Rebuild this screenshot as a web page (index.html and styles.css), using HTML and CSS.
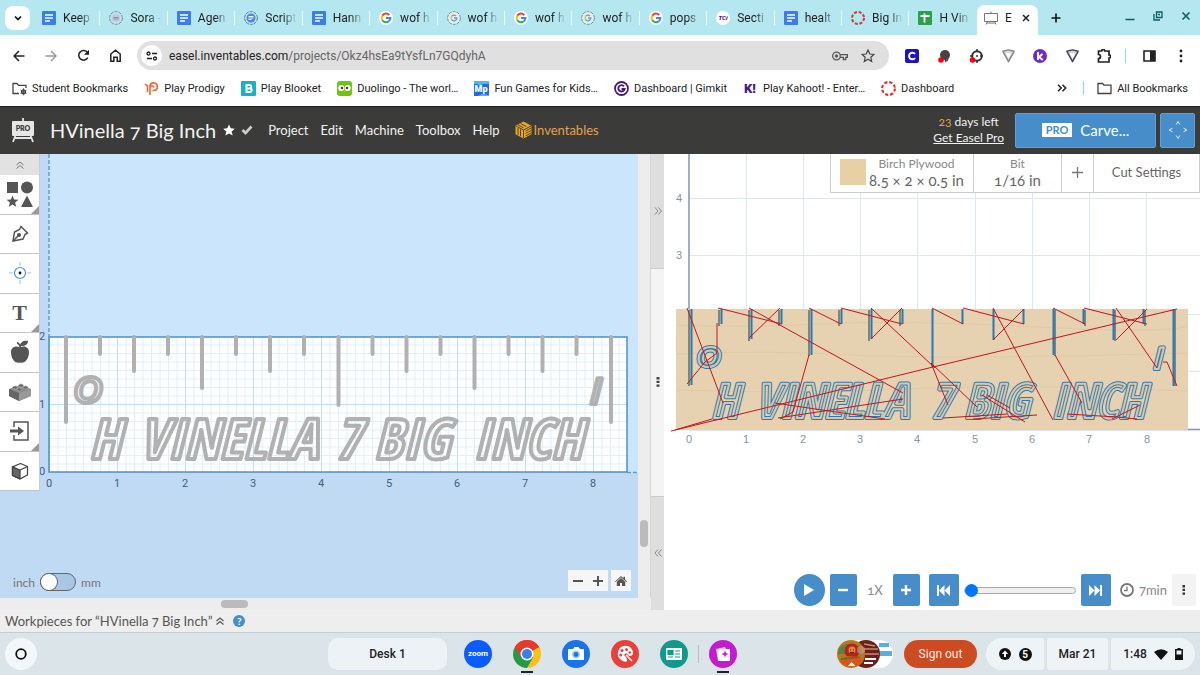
FILE: index.html
```html
<!DOCTYPE html>
<html lang="en">

<head>
    <meta charset="UTF-8">
    <meta name="viewport" content="width=device-width, initial-scale=1.0">
    <title>Easel - HVinella 7 Big Inch</title>
    <link rel="stylesheet" href="styles.css">
</head>

<body>
    <!-- shared icons -->
    <svg class="defs" width="0" height="0" aria-hidden="true">
        <symbol id="docs" viewBox="0 0 14 14">
            <rect width="14" height="14" rx="1" fill="#3b7ded" />
            <path d="M3 4h8M3 7h8M3 10h5" stroke="#fff" stroke-width="1.4" />
        </symbol>
        <symbol id="google" viewBox="0 0 14 14">
            <circle cx="7" cy="7" r="7" fill="#fff" />
            <g fill="none" stroke-width="2">
                <path d="M10.3 4A4.4 4.4 0 0 0 3.3 4.7" stroke="#ea4335" />
                <path d="M3.3 4.7A4.4 4.4 0 0 0 3.3 9.3" stroke="#fbbc05" />
                <path d="M3.3 9.3A4.4 4.4 0 0 0 9.8 10.3" stroke="#34a853" />
                <path d="M9.8 10.3A4.4 4.4 0 0 0 11.4 7H7" stroke="#4285f4" />
            </g>
        </symbol>
        <symbol id="google-off" viewBox="0 0 14 14">
            <circle cx="7" cy="7" r="6.4" fill="#dcf1f4" stroke="#7c8b94" stroke-width="1" stroke-dasharray="3 1" />
            <g fill="none" stroke-width="1.3">
                <path d="M9 5A2.9 2.9 0 0 0 4.5 5.5" stroke="#e0756c" />
                <path d="M4.5 5.5A2.9 2.9 0 0 0 4.5 8.5" stroke="#dcb958" />
                <path d="M4.5 8.5A2.9 2.9 0 0 0 9 9" stroke="#69a67a" />
                <path d="M9 9A2.9 2.9 0 0 0 9.8 7H7" stroke="#6d96d6" />
            </g>
        </symbol>
        <symbol id="canvas" viewBox="0 0 14 14">
            <circle cx="7" cy="7" r="6" fill="none" stroke="#d6392f" stroke-width="2" stroke-dasharray="3 1.7" />
        </symbol>
        <symbol id="shield" viewBox="0 0 16 16">
            <path d="M2 3.500L8 2l6 1.500L8 14.500z" fill="#d8d8dc" stroke="currentColor" stroke-width="1.6" stroke-linejoin="round" />
            <path d="M5 5.500h6L8 11z" fill="#fff" />
        </symbol>
    </svg>

    <header class="tabstrip">
        <button class="tab-search" aria-label="Search tabs">
            <svg width="10" height="10" viewBox="0 0 10 10"><path d="M2 3.500l3 3 3-3" fill="none" stroke="#111" stroke-width="1.700" /></svg>
        </button>
        <div class="tabs">
            <a class="tab" href="#"><svg><use href="#docs" /></svg><span>Keep</span></a>
            <a class="tab" href="#"><svg viewBox="0 0 14 14"><circle cx="7" cy="7" r="6.400" fill="none" stroke="#7c8b94" stroke-dasharray="3 1" /><circle cx="7" cy="7" r="4" fill="#cfc5d8" /><path d="M4.500 6.500h5M4.500 8h5" stroke="#7f8fb5" /></svg><span>Sora -</span></a>
            <a class="tab" href="#"><svg><use href="#docs" /></svg><span>Agen</span></a>
            <a class="tab" href="#"><svg viewBox="0 0 14 14"><circle cx="7" cy="7" r="6.400" fill="none" stroke="#62788a" stroke-dasharray="3 1" /><circle cx="7" cy="7" r="4.500" fill="#4f86e6" /><path d="M4.500 5.500h5M4.500 7h5M4.500 8.500h3" stroke="#fff" stroke-width=".9" /></svg><span>Script</span></a>
            <a class="tab" href="#"><svg><use href="#docs" /></svg><span>Hann</span></a>
            <a class="tab" href="#"><svg><use href="#google" /></svg><span>wof h</span></a>
            <a class="tab" href="#"><svg><use href="#google-off" /></svg><span>wof h</span></a>
            <a class="tab" href="#"><svg><use href="#google" /></svg><span>wof h</span></a>
            <a class="tab" href="#"><svg><use href="#google-off" /></svg><span>wof h</span></a>
            <a class="tab" href="#"><svg><use href="#google" /></svg><span>pops</span></a>
            <a class="tab" href="#"><svg viewBox="0 0 14 14"><circle cx="7" cy="7" r="7" fill="#fff" /><text x="7" y="9" class="tci">TCi</text></svg><span>Secti</span></a>
            <a class="tab" href="#"><svg><use href="#docs" /></svg><span>healt</span></a>
            <a class="tab" href="#"><svg><use href="#canvas" /></svg><span>Big In</span></a>
            <a class="tab last" href="#"><svg viewBox="0 0 14 14"><rect width="14" height="14" rx="1" fill="#2c9f4b" /><path d="M2.500 5h9M6.500 2.500v9" stroke="#fff" stroke-width="1.800" /></svg><span>H Vin</span></a>
        </div>
        <div class="tab-active">
            <svg width="14" height="14" viewBox="0 0 14 14" fill="none" stroke="#777"><path d="M.5 2.500h13v8H.5zM7 .5v2M3.500 10.500L2 13.500M10.500 10.500l1.500 3M3 12h8" /></svg>
            <span>E</span>
            <button aria-label="Close tab"><svg width="8" height="8" viewBox="0 0 8 8"><path d="M1 1l6 6M7 1L1 7" stroke="#222" stroke-width="1.500" /></svg></button>
        </div>
        <button class="new-tab" aria-label="New tab"><svg width="10" height="10" viewBox="0 0 10 10"><path d="M5 .5v9M.5 5h9" stroke="#111" stroke-width="1.600" /></svg></button>
        <div class="window-buttons">
            <button aria-label="Minimize"><svg width="10" height="10" viewBox="0 0 10 10"><path d="M.5 8.500h9" stroke="#0d5c66" stroke-width="1.500" /></svg></button>
            <button aria-label="Restore"><svg width="10" height="10" viewBox="0 0 10 10" fill="none" stroke="#0d5c66" stroke-width="1.300"><path d="M3.500 1h5.500v5.500H3.500zM1 3v6h6M5 3.500h2" /></svg></button>
            <button aria-label="Close"><svg width="10" height="10" viewBox="0 0 10 10"><path d="M1.500 1.500l7 7M8.500 1.500l-7 7" stroke="#0d5c66" stroke-width="1.600" /></svg></button>
        </div>
    </header>

    <nav class="toolbar">
        <button aria-label="Back"><svg width="12" height="12" viewBox="0 0 12 12" fill="none" stroke="#222" stroke-width="1.500"><path d="M11.500 6H1.500M6 1L1 6l5 5" /></svg></button>
        <button aria-label="Forward"><svg width="12" height="12" viewBox="0 0 12 12" fill="none" stroke="#999" stroke-width="1.500"><path d="M.5 6h10M6 1l5 5-5 5" /></svg></button>
        <button aria-label="Reload"><svg width="13" height="13" viewBox="0 0 13 13"><path d="M10.800 8.600A4.800 4.800 0 1 1 10.500 3.600L11.500 5" fill="none" stroke="#222" stroke-width="1.500" /><path d="M12 .8v5H7z" fill="#222" /></svg></button>
        <button aria-label="Home"><svg width="13" height="13" viewBox="0 0 13 13" fill="none" stroke="#222" stroke-width="1.500"><path d="M1.800 5v7.200h3V8.200h3.400v4h3V5L6.500 1.200z" /></svg></button>
        <div class="omnibox">
            <button class="site-info" aria-label="Site information"><svg width="12" height="10" viewBox="0 0 12 10" fill="none" stroke="#222" stroke-width="1.300"><circle cx="2.500" cy="2.500" r="1.500" /><path d="M6 2.500h5M1 7.500h5" /><circle cx="9" cy="7.500" r="1.500" /></svg></button>
            <p>easel.inventables.com<span>/projects/Okz4hsEa9tYsfLn7GQdyhA</span></p>
            <button aria-label="Passwords"><svg width="16" height="10" viewBox="0 0 16 10" fill="none" stroke="#555" stroke-width="1.300"><circle cx="4.500" cy="5" r="3.800" /><circle cx="4.500" cy="5" r="1" /><path d="M8.200 3.700h7.200v2.600h-1.700v2.200h-2.400V6.300H8.200" /></svg></button>
            <button aria-label="Bookmark this tab"><svg width="14" height="14" viewBox="0 0 14 14" fill="none" stroke="#444" stroke-width="1.200"><path d="M7 1l1.800 4 4.200.4-3.200 2.900.9 4.200L7 10.300l-3.700 2.200.9-4.200L1 5.400 5.200 5z" /></svg></button>
        </div>
        <div class="extensions">
            <button aria-label="Clever"><svg width="14" height="14" viewBox="0 0 14 14"><rect width="14" height="14" rx="2" fill="#1b13c4" /><path d="M10 5A3.300 3.300 0 1 0 10 9" fill="none" stroke="#fff" stroke-width="2" /></svg></button>
            <button aria-label="Recorder"><svg width="14" height="14" viewBox="0 0 14 14"><circle cx="8" cy="6" r="5" fill="#444" /><path d="M8 10l1 3M11 8l-1 4" stroke="#444" stroke-width="1.500" /><circle cx="4" cy="11" r="2.800" fill="#f00" /></svg></button>
            <button aria-label="Target"><svg width="14" height="14" viewBox="0 0 14 14"><circle cx="8" cy="7" r="4.800" fill="#fff" stroke="#333" stroke-width="2" /><path d="M8 0v3M8 11v3M1 7h3M11 7h3" stroke="#333" stroke-width="1.500" /><circle cx="8" cy="7" r="1" fill="#333" /><circle cx="3.500" cy="11" r="2.800" fill="#f00" /></svg></button>
            <button class="shield-light" aria-label="Shield"><svg width="15" height="15"><use href="#shield" /></svg></button>
            <button aria-label="Kami"><svg width="14" height="14" viewBox="0 0 14 14"><circle cx="7" cy="7" r="7" fill="#6f2ccb" /><path d="M5 3v8M9.500 5L6 8l3.800 3" fill="none" stroke="#fff" stroke-width="1.900" /></svg></button>
            <button class="shield-dark" aria-label="Guard"><svg width="15" height="15"><use href="#shield" /></svg></button>
            <button aria-label="Extensions"><svg width="14" height="14" viewBox="0 0 14 14"><path d="M1.500 2h3.200a1.500 1.500 0 0 1 3 0H12v3.800a1.600 1.600 0 0 1 0 3.200v4H1.500V9.500a2 2 0 0 0 0-4z" fill="none" stroke="#222" stroke-width="1.700" /></svg></button>
        </div>
        <i class="divider"></i>
        <button aria-label="Side panel"><svg width="13" height="12" viewBox="0 0 13 12"><path d="M1 1h11v10H1z" fill="none" stroke="#222" stroke-width="1.600" /><path d="M7 1h5v10H7z" fill="#222" /></svg></button>
        <button aria-label="Menu"><svg width="4" height="14" viewBox="0 0 4 14" fill="#222"><circle cx="2" cy="2" r="1.400" /><circle cx="2" cy="7" r="1.400" /><circle cx="2" cy="12" r="1.400" /></svg></button>
    </nav>

    <nav class="bookmarks">
        <a href="#"><svg viewBox="0 0 15 15" fill="none" stroke="#444" stroke-width="1.300"><path d="M7 12.500H1V2.500h4l1.500 1.800H14V7" /><circle cx="11.500" cy="10.800" r="2" /><path d="M11.500 7.300v7M8.500 9l6 3.500M14.500 9l-6 3.500" stroke-width=".8" /></svg>Student Bookmarks</a>
        <a href="#"><svg viewBox="0 0 15 15" fill="none" stroke="#e8693a" stroke-width="1.600"><path d="M6 14V4.500a3.800 3.800 0 1 1 4 5H8.500M3.500 11V5L1 3M6 7.500a2 2 0 0 1 4-1" /></svg>Play Prodigy</a>
        <a href="#"><svg viewBox="0 0 15 15"><rect width="15" height="15" rx="1" fill="#17b3c1" /><path d="M5.500 4h3a1.600 1.600 0 0 1 0 3.400h-3zM5.500 7.400h3.400a1.800 1.800 0 0 1 0 3.600H5.500z" fill="none" stroke="#fff" stroke-width="2" /></svg>Play Blooket</a>
        <a href="#"><svg viewBox="0 0 15 15"><rect width="15" height="15" rx="3" fill="#6cc417" /><circle cx="4.300" cy="7" r="3" fill="#fff" /><circle cx="10.700" cy="7" r="3" fill="#fff" /><circle cx="5" cy="7" r="1.300" fill="#444" /><circle cx="10" cy="7" r="1.300" fill="#444" /><path d="M6 9h3l-1.500 2.500z" fill="#f5a623" /></svg>Duolingo - The worl…</a>
        <a href="#"><svg viewBox="0 0 15 15"><rect width="15" height="15" fill="#2168e8" /><path d="M0 0h15v3H9L6 5 3 3H0zM4 15l4-2 7 1v1z" fill="#4fb6f6" /><text x="7" y="11" class="mp">Mp</text></svg>Fun Games for Kids…</a>
        <a href="#"><svg viewBox="0 0 15 15"><circle cx="7.500" cy="7.500" r="6.500" fill="none" stroke="#4a1a78" stroke-width="1.800" /><path d="M10 5.300A3.200 3.200 0 1 0 10.600 8H7.500" fill="none" stroke="#4a1a78" stroke-width="1.900" /></svg>Dashboard | Gimkit</a>
        <a href="#"><svg viewBox="0 0 15 15"><text x="1" y="12" class="kahoot">K!</text></svg>Play Kahoot! - Enter…</a>
        <a href="#"><svg><use href="#canvas" /></svg>Dashboard</a>
        <button class="more" aria-label="More bookmarks"><svg width="10" height="8" viewBox="0 0 10 8" fill="none" stroke="#222" stroke-width="1.500"><path d="M1 .8L4.200 4 1 7.200M5.500.8L8.700 4 5.500 7.200" /></svg></button>
        <i class="divider"></i>
        <a class="all" href="#"><svg viewBox="0 0 15 15" fill="none" stroke="#444" stroke-width="1.300"><path d="M1 2.500h4.500L7 4.200h7v8.300H1z" /></svg>All Bookmarks</a>
    </nav>

    <header class="easel-bar">
        <svg class="easel-logo" width="24" height="26" viewBox="0 0 24 26"><path d="M12 1v4M5 17l-3 8M19 17l3 8M4 21h16" stroke="#e6e6e6" stroke-width="1.800" /><rect x="1" y="4" width="22" height="15" rx="1" fill="#e6e6e6" /><text x="12" y="14" class="logo-pro">PRO</text></svg>
        <h1>HVinella 7 Big Inch</h1>
        <svg class="star" width="12" height="12" viewBox="0 0 14 14"><path d="M7 .5l2 4.600 4.800.4-3.700 3.200 1.200 4.800L7 11l-4.300 2.500 1.200-4.800L.2 5.500 5 5.100z" fill="#fff" /></svg>
        <svg class="check" width="12" height="10" viewBox="0 0 12 10"><path d="M1.500 5l3 3 6-6.500" fill="none" stroke="#ccc" stroke-width="2.600" /></svg>
        <nav class="menu">
            <a href="#">Project</a>
            <a href="#">Edit</a>
            <a href="#">Machine</a>
            <a href="#">Toolbox</a>
            <a href="#">Help</a>
            <a class="inventables" href="#"><svg width="17" height="18" viewBox="0 0 17 18"><path d="M8.500.5l8 4.300v8.400l-8 4.300-8-4.300V4.800z" fill="#eda522" /><path d="M8.500 9v8M8.500 9L1 5M8.500 9L16 5M3 3.800l5.500 3M5.500 2.500l5.800 3M3 7v7M5.500 8.300v7M10.500 10l6-3.200M10.500 12.500l6-3.200M10.500 15l6-3.200" fill="none" stroke="#3b3c39" stroke-width=".9" /></svg>Inventables</a>
        </nav>
        <div class="trial">
            <p><b>23</b> days left</p>
            <a href="#">Get Easel Pro</a>
        </div>
        <button class="carve"><small>PRO</small>Carve...</button>
        <button class="jog" aria-label="Jog machine"><svg width="20" height="20" viewBox="0 0 20 20" fill="none" stroke="#e3effa" stroke-width="1"><path d="M8.200 4.500L10 1.500l1.800 3M8.200 15.500l1.800 3 1.800-3M4.500 8.200L1.200 10l3.300 1.800M15.500 8.200l3.300 1.800-3.300 1.800" /></svg></button>
    </header>

    <main class="workspace">
        <section class="design">
            <div class="design-view">
                <svg class="design-canvas">
                    <defs>
                        <pattern id="minor" x="49" y="182" width="8.500" height="8.500" patternUnits="userSpaceOnUse">
                            <path d="M0 .5h8.500M.5 0v8.500" stroke="#e4eef4" fill="none" />
                        </pattern>
                        <pattern id="major" x="49" y="182" width="68" height="68" patternUnits="userSpaceOnUse">
                            <path d="M0 .5h68M.5 0v68" stroke="#c3def2" fill="none" />
                        </pattern>
                    </defs>
                    <rect y="318" width="100%" height="100%" fill="#bfdaf2" />
                    <rect width="49" height="100%" fill="#bfdaf2" />
                    <rect x="49" y="183" width="578" height="135" fill="#fdfeff" />
                    <rect x="49" y="183" width="578" height="135" fill="url(#minor)" />
                    <rect x="49" y="183" width="578" height="135" fill="url(#major)" />
                    <path d="M49 0v183M627 318.500h11" stroke="#5f9fd4" stroke-width="1.500" stroke-dasharray="4 2" />
                    <rect x="49" y="183" width="578" height="135" fill="none" stroke="#4a90cf" stroke-width="1.500" />
                    <path class="ruler-cuts" d="M66 183V268M100 183v17M134 183v34M168 183v17M202 183v51M236 183v17M270 183v34M304 183v17M338.500 183v68M372.500 183v17M406.500 183v34M440.500 183v17M474.500 183v51M508.500 183v17M542.500 183v34M576.500 183v17M611 183v85" />
                    <g class="lettering">
                        <text x="74" y="249" class="zero">O</text>
                        <text x="588" y="250" class="small">I</text>
                        <text x="89" y="305">H</text>
                        <text x="139" y="305">VINELLA</text>
                        <text x="335" y="305">7</text>
                        <text x="374" y="305">BIG</text>
                        <text x="473" y="305">INCH</text>
                    </g>
                    <g class="axis">
                        <text x="42" y="186">2</text><text x="42" y="254">1</text><text x="42" y="321">0</text>
                        <text x="49" y="333">0</text><text x="117" y="333">1</text><text x="185" y="333">2</text>
                        <text x="253" y="333">3</text><text x="321" y="333">4</text><text x="389" y="333">5</text>
                        <text x="457" y="333">6</text><text x="525" y="333">7</text><text x="593" y="333">8</text>
                    </g>
                </svg>

                <div class="tools">
                    <button class="collapse" aria-label="Collapse tools"><svg width="8" height="8" viewBox="0 0 8 8" fill="none" stroke="#777"><path d="M.5 4L4 1l3.500 3M.5 7.500L4 4.500l3.500 3" /></svg></button>
                    <div class="tool-list">
                        <button class="has-more" aria-label="Shapes"><svg width="28" height="28" viewBox="0 0 28 28" fill="#555"><path d="M1 2h11v11H1zM6.500 15.500l1.600 3.900 4.400.3-3.400 2.800 1.100 4.300-3.700-2.300-3.700 2.300 1.100-4.300L.5 19.700l4.400-.3zM21 15.500l6 11.500H15z" /><circle cx="21" cy="7.500" r="6" /></svg></button>
                        <button aria-label="Pen"><svg width="18" height="18" viewBox="0 0 18 18" fill="none" stroke="#555" stroke-width="1.500"><path d="M2 16l1.500-9 5-2.500L10 1.500l6.500 6.500L14 9.500l-2 4.500z" /><path d="M2 16l5.500-5.500" /><circle cx="8" cy="10" r="1.300" fill="#555" /></svg></button>
                        <button aria-label="Drill point"><svg width="22" height="22" viewBox="0 0 22 22" fill="none" stroke="#4a90e2"><circle cx="11" cy="11" r="5.500" stroke-width="1.200" /><path d="M11 0v4M11 18v4M0 11h4M18 11h4" stroke="#9cc3ec" /><circle cx="11" cy="11" r="1.400" fill="#112" stroke="none" /></svg></button>
                        <button class="has-more tool-text" aria-label="Text">T</button>
                        <button aria-label="Icons"><svg width="20" height="24" viewBox="0 0 20 24" fill="#555"><path d="M10 7.500C14 5 19.500 7 19 13c-.5 6-4 11-9 9.500C5 24 1.500 19 1 13 .5 7 6 5 10 7.500z" /><path d="M10 6c0-4 4-6 8-5 0 4-4 5.500-8 5z" /><path d="M10.500 8Q10 4 7 2.500" fill="none" stroke="#555" stroke-width="1.500" /></svg></button>
                        <button aria-label="Apps"><svg width="22" height="18" viewBox="0 0 22 18"><path d="M0 6l11-4 11 4v7l-12 5L0 13z" fill="#888" /><path d="M0 6l10 4v8L0 13z" fill="#666" /><path d="M10 10l12-4v7l-12 5z" fill="#999" /><g fill="#666" stroke="#bbb" stroke-width=".6"><ellipse cx="6" cy="4.500" rx="2.500" ry="1.600" /><ellipse cx="12" cy="2.500" rx="2.500" ry="1.600" /><ellipse cx="10.500" cy="6.500" rx="2.500" ry="1.600" /><ellipse cx="16.500" cy="4.500" rx="2.500" ry="1.600" /></g></svg></button>
                        <button class="has-more" aria-label="Import"><svg width="20" height="20" viewBox="0 0 20 20" fill="none" stroke="#555" stroke-width="1.500"><path d="M4 6V1h14v18H4v-5" /><path d="M0 10h9" stroke-width="3" /><path d="M8 5.500l6 4.500-6 4.500z" fill="#555" stroke="none" /></svg></button>
                        <button aria-label="3D"><svg width="18" height="18" viewBox="0 0 18 18" fill="#fff" stroke="#444" stroke-width="1.300" stroke-linejoin="round"><path d="M1.500 4.800L9.500 1.500l7 3v8.500L9 16.800l-7.500-3.500z" /><path d="M9 8v8.800l-7.500-3.500V4.800z" fill="#666" /><path d="M9 8l7.500-3.500" /></svg></button>
                    </div>
                </div>

                <div class="units">
                    <label for="unit">inch</label>
                    <input type="checkbox" id="unit" role="switch" aria-label="Use millimetres">
                    <span>mm</span>
                </div>
                <div class="zoom">
                    <div>
                        <button aria-label="Zoom out"><svg width="10" height="10" viewBox="0 0 10 10"><path d="M0 5h10" stroke="#555" stroke-width="2" /></svg></button>
                        <button aria-label="Zoom in"><svg width="10" height="10" viewBox="0 0 10 10"><path d="M0 5h10M5 0v10" stroke="#555" stroke-width="2" /></svg></button>
                    </div>
                    <button class="home" aria-label="Reset view"><svg width="12" height="10" viewBox="0 0 12 10" fill="#555"><path d="M6 2l4.200 3.800V10H7V7H5v3H1.800V5.800zM6 0l2.500 2.200V.8H10v2.700l2 1.900-.7.700L6 1.300.7 6.100 0 5.400z" /></svg></button>
                </div>
            </div>
            <div class="scroll-y"><i></i></div>
            <div class="scroll-x"><i></i></div>
        </section>

        <div class="splitter">
            <button aria-label="Expand design"><svg width="8" height="8" viewBox="0 0 8 8" fill="none" stroke="#888"><path d="M1 .5L4 4 1 7.500M4.500.5l3 3.500-3 3.500" /></svg></button>
            <div class="grip"><svg width="4" height="10" viewBox="0 0 4 10" fill="#444"><path d="M.5 0h3v2.400h-3zM.5 3.700h3v2.400h-3zM.5 7.400h3v2.400h-3z" /></svg></div>
            <button aria-label="Expand preview"><svg width="8" height="8" viewBox="0 0 8 8" fill="none" stroke="#888"><path d="M4 .5L1 4l3 3.500M7.500.5l-3 3.500 3 3.500" /></svg></button>
        </div>

        <section class="preview">
            <svg class="preview-canvas">
                <path d="M82.500 0v276M139.500 0v276M196.500 0v276M253.500 0v276M311.500 0v276M368.500 0v276M425.500 0v276M482.500 0v276" stroke="#dde6f3" />
                <path d="M25 44.500h2000M25 101.500h2000M25 160.500h2000M25 217.500h2000" stroke="#dde6f3" />
                <path d="M25 0v276M25 275.500h2000" stroke="#7f97b5" stroke-width="1.500" />
                <rect x="12" y="155" width="512" height="121" fill="#e6d1b1" />
                <path d="M14 171q60 3 140-1t220 3 150-2M12 200q90-4 180 1t330-2M14 236q110 4 230-1t280 2" fill="none" stroke="#e1caa6" />
                <path class="shade" d="M25 156v76M55 156v16M85 156v31M115 156v16M145 156v46M175 156v16M205 156v31M236 156v16" />
                <path class="shade" d="M391 156v46M421 156v16M451 156v31M481 156v16M511 156v76" />
                <path class="cuts" d="M27.500 155v76M57.500 155v15M87.500 155v30M117.500 155v15M147.500 155v46M177.500 155v15M207.500 155v30M238.500 155v15M268.500 155v58M298.500 155v15M329.500 155v31M359.500 155v15M389.500 155v46M419.500 155v15M449.500 155v31M479.500 155v15M509.500 155v77" />
                <g class="toolpath">
                    <text x="33" y="213" class="zero">O</text>
                    <text x="488" y="215" class="small">I</text>
                    <text x="47" y="264">H</text>
                    <text x="91" y="264">VINELLA</text>
                    <text x="266" y="264">7</text>
                    <text x="300" y="264">BIG</text>
                    <text x="387" y="264">INCH</text>
                </g>
                <g class="toolpath-inner" aria-hidden="true">
                    <text x="33" y="213" class="zero">O</text>
                    <text x="488" y="215" class="small">I</text>
                    <text x="47" y="264">H</text>
                    <text x="91" y="264">VINELLA</text>
                    <text x="266" y="264">7</text>
                    <text x="300" y="264">BIG</text>
                    <text x="387" y="264">INCH</text>
                </g>
                <!-- rapid moves -->
                <path class="rapids" d="M7 277L269 213 513 155M23 154L59 249M53 169V199L41 208 23 230M54 154L118 170M85 154L239 239M85 184L116 154M145 154L177 170M145 201L129 258 116 265M177 154L238 170M207 154L271 214M207 185L238 154M111 249L158 256 221 265M114 264L239 245M11 276L48 265M268 154L299 170M299 154L360 170M329 154L389 266M329 186L360 155M389 154L421 170M391 201L418 249M420 154L483 170M452 154L493 214M452 186L483 155M267 209L284 251M267 209L313 253M318 241L361 268M323 241L346 254M279 264L343 260M309 265L373 261M403 260L453 263 473 265M448 265L476 251M499 208L503 208 513 232" />
                <g class="axis">
                    <text x="15" y="48">4</text><text x="15" y="105">3</text>
                    <text x="25" y="289">0</text><text x="82" y="289">1</text><text x="139" y="289">2</text>
                    <text x="196" y="289">3</text><text x="253" y="289">4</text><text x="311" y="289">5</text>
                    <text x="368" y="289">6</text><text x="425" y="289">7</text><text x="483" y="289">8</text>
                </g>
            </svg>

            <div class="material-bar">
                <button class="material"><i></i><span><small>Birch Plywood</small>8.5 × 2 × 0.5 in</span></button>
                <button class="bit"><span><small>Bit</small>1/16 in</span></button>
                <button class="add" aria-label="Add bit"><svg width="11" height="11" viewBox="0 0 11 11"><path d="M5.500 0v11M0 5.500h11" stroke="#777" stroke-width="1.300" /></svg></button>
                <button class="settings">Cut Settings</button>
            </div>

            <div class="player">
                <button class="play" aria-label="Play"><svg width="10" height="12" viewBox="0 0 10 12"><path d="M0 0l10 6-10 6z" fill="#fff" /></svg></button>
                <button aria-label="Slower"><svg width="10" height="10" viewBox="0 0 10 10"><path d="M0 5h10" stroke="#fff" stroke-width="2.400" /></svg></button>
                <span class="speed">1X</span>
                <button aria-label="Faster"><svg width="10" height="10" viewBox="0 0 10 10"><path d="M0 5h10M5 0v10" stroke="#fff" stroke-width="2.400" /></svg></button>
                <button class="skip first" aria-label="To start"><svg width="13" height="11" viewBox="0 0 13 11" fill="#fff"><path d="M0 0h2v11H0zM7.500 0v11L2 5.500zM13 0v11L7.500 5.500z" /></svg></button>
                <input type="range" min="0" max="100" value="0" aria-label="Simulation progress">
                <button class="skip" aria-label="To end"><svg width="13" height="11" viewBox="0 0 13 11" fill="#fff"><path d="M11 0h2v11h-2zM5.500 0v11L11 5.500zM0 0v11l5.500-5.500z" /></svg></button>
                <svg class="clock" width="14" height="14" viewBox="0 0 14 14" fill="none" stroke="#777"><circle cx="7" cy="7" r="6" stroke-width="1.800" /><path d="M7 3.500V7.500H4" stroke-width="1.300" /></svg>
                <span class="time">7min</span>
                <button class="options" aria-label="Options"><svg width="4" height="10" viewBox="0 0 4 10" fill="#333"><path d="M.5 0h2.500v2.400H.5zM.5 3.700h2.500v2.400H.5zM.5 7.400h2.500v2.400H.5z" /></svg></button>
            </div>
        </section>
    </main>

    <footer class="workpieces">
        <span>Workpieces for “HVinella 7 Big Inch”</span>
        <button aria-label="Show workpieces"><svg width="8" height="8" viewBox="0 0 8 8" fill="none" stroke="#555" stroke-width="1.200"><path d="M.5 4L4 1l3.500 3M.5 7.500L4 4.500l3.500 3" /></svg></button>
        <button class="help" aria-label="Help">?</button>
    </footer>

    <div class="shelf">
        <button class="launcher" aria-label="Launcher"><svg width="12" height="12" viewBox="0 0 12 12"><circle cx="6" cy="6" r="4.800" fill="none" stroke="#111" stroke-width="1.800" /></svg></button>
        <button class="desk">Desk 1</button>
        <div class="apps">
            <button aria-label="Zoom"><svg viewBox="0 0 28 28"><circle cx="14" cy="14" r="14" fill="#0b5cff" /><text x="14" y="16" class="zoom-word">zoom</text></svg></button>
            <button class="running" aria-label="Chrome"><svg viewBox="0 0 28 28"><circle cx="14" cy="14" r="14" fill="#fbc116" /><path d="M14 14L1.900 7A14 14 0 0 1 26.100 7z" fill="#e33b2e" /><path d="M14 14L1.900 7A14 14 0 0 0 14 28l6-10.500z" fill="#229a4b" /><path d="M14 7.500h12.400A14 14 0 0 0 1.900 7L8 17.500z" fill="#e33b2e" /><circle cx="14" cy="14" r="6.500" fill="#fff" /><circle cx="14" cy="14" r="5" fill="#3b7de9" /></svg></button>
            <button aria-label="Camera"><svg viewBox="0 0 28 28"><circle cx="14" cy="14" r="14" fill="#1a73e8" /><path d="M6 9h5l1.500-2h4L18 9h4v11H6z" fill="#fff" /><circle cx="14" cy="14.500" r="4" fill="#a9cbf7" /><circle cx="14" cy="14.500" r="2.400" fill="#1a73e8" /></svg></button>
            <button aria-label="Canvas"><svg viewBox="0 0 28 28"><circle cx="14" cy="14" r="14" fill="#e8403a" /><path d="M13 6c5-1 9 3 9 7 0 3-3 3-5 3s-2 2-1 4-2 2-4 1c-4-2-6-5-5-9s3-5.500 6-6z" fill="#fff" /><g fill="#e8403a"><circle cx="11" cy="10.500" r="1.500" /><circle cx="15.500" cy="9.500" r="1.500" /><circle cx="9.800" cy="15" r="1.500" /><circle cx="18.800" cy="12.500" r="1.300" /></g><path d="M14 14l7 7" stroke="#e8403a" stroke-width="3" /><path d="M15 15l6 6" stroke="#fff" stroke-width="1.500" /></svg></button>
            <button aria-label="News"><svg viewBox="0 0 28 28"><circle cx="14" cy="14" r="14" fill="#12998d" /><rect x="6" y="8" width="16" height="12" rx="1" fill="#fff" /><path d="M8 10.500h5v4H8zM8 17h5M15 11h5M15 14h5M15 17h5" fill="#12998d" stroke="#12998d" stroke-width="1.200" /></svg></button>
            <i></i>
            <button class="running" aria-label="Gallery"><svg viewBox="0 0 28 28"><circle cx="14" cy="14" r="14" fill="#c31ccf" /><path d="M7 9l9-2 1 2h4v11l-12 1z" fill="#f4c6f7" /><rect x="9" y="9" width="12" height="12" rx="1" fill="#fff" /><path d="M16 10.500l1 2.500 2.500 1-2.500 1-1 2.500-1-2.500-2.500-1 2.500-1z" fill="#c31ccf" /></svg></button>
        </div>
        <div class="tray">
            <button class="holding" aria-label="Recent screen captures"><svg width="56" height="28" viewBox="0 0 56 28"><rect width="56" height="28" rx="14" fill="#fff" /><path d="M42 3h10v4H42zM42 11h13v5H42z" fill="#5aaee6" /><circle cx="29" cy="14" r="14" fill="#6d1f1b" /><path d="M27 4l11 2M27 9h14M28 14h14" stroke="#c98a70" stroke-width="1.500" /><path d="M28 19h11M27 23h9" stroke="#fff" stroke-width="2" /><circle cx="14" cy="14" r="14" fill="#b7791d" /><path d="M2 8q10-8 22-1l2 7H1z" fill="#5d8040" /><circle cx="15" cy="11" r="7.500" fill="#b6221d" /><circle cx="15" cy="10" r="3.500" fill="#d98a3f" /><path d="M13 10h1M16 10h1M13 12.500q2 1 4 0" stroke="#4a1712" /><path d="M2 19l9-3 12 1 2 4-5 5q-11 4-18-7z" fill="#d9531a" /><circle cx="24" cy="10" r="4" fill="#d89a8d" opacity=".6" /><path d="M4 19l18-2" stroke="#58702f" stroke-width="1.500" /><path d="M11 26l3.500-4 4 4z" fill="#fff" /></svg></button>
            <button class="sign-out">Sign out</button>
            <button class="status left" aria-label="Updates"><svg width="12" height="12" viewBox="0 0 12 12"><circle cx="6" cy="6" r="6" fill="#111" /><path d="M6 2.500L2.800 6H5v3h2V6h2.200z" fill="#fff" /></svg><b>5</b></button>
            <button class="status">Mar 21</button>
            <button class="status right">1:48<svg width="14" height="11" viewBox="0 0 14 11"><path d="M0 3q7-5.500 14 0L7 11z" fill="#111" /></svg><svg width="8" height="12" viewBox="0 0 8 12"><path d="M.8 1.800h6.400v9.400H.8z" fill="none" stroke="#111" stroke-width="1.500" /><path d="M2.500 0h3v2h-3zM1 6.500h6V11H1z" fill="#111" /></svg></button>
        </div>
    </div>
</body>

</html>
```
FILE: styles.css
```css
* {
    margin: 0;
    padding: 0;
    box-sizing: border-box;
}

html,
body {
    height: 100%;
}

body {
    display: flex;
    flex-direction: column;
    overflow: hidden;
    background-color: #fff;
    font-family: Roboto, sans-serif;
    font-size: 12px;
    color: #222;
}

a {
    color: inherit;
    text-decoration: none;
}

button {
    display: flex;
    align-items: center;
    justify-content: center;
    border: none;
    background: none;
    font: inherit;
    color: inherit;
}

svg {
    display: block;
    flex: none;
}

.defs {
    position: absolute;
}

/* browser tabs */
.tabstrip {
    display: flex;
    align-items: center;
    flex: none;
    height: 35px;
    padding-left: 5px;
    background-color: #b4e7f0;
}

.tab-search {
    width: 25px;
    height: 24px;
    border-radius: 8px;
    background-color: #fff;
}

.tabs {
    display: flex;
    flex: 1;
    min-width: 0;
    margin-left: 3px;
}

.tab {
    display: flex;
    align-items: center;
    flex: 1;
    min-width: 0;
    height: 14px;
    padding: 0 2px 0 9px;
    border-right: 1px solid #f2fbfc;
}

.tab.last {
    border-right-color: transparent;
}

.tab svg {
    width: 14px;
    height: 14px;
    margin-right: 7px;
}

.tab span {
    flex: 1;
    white-space: nowrap;
    line-height: 16px;
    -webkit-mask-image: linear-gradient(to right, #000 50%, transparent 90%);
    mask-image: linear-gradient(to right, #000 50%, transparent 90%);
}

.tci {
    font-size: 6px;
    font-weight: 900;
    font-style: italic;
    text-anchor: middle;
    fill: #5a1a8c;
}

.tab-active {
    display: flex;
    align-items: center;
    align-self: flex-end;
    width: 61px;
    height: 30px;
    padding: 0 8px 5px 7px;
    border-radius: 8px 8px 0 0;
    background-color: #fff;
}

.tab-active span {
    flex: 1;
    margin-left: 7px;
}

.new-tab {
    width: 36px;
    height: 24px;
}

.window-buttons {
    display: flex;
    margin: 0 0 4px 42px;
}

.window-buttons button {
    width: 28px;
    height: 28px;
}

/* address bar */
.toolbar {
    display: flex;
    align-items: center;
    flex: none;
    height: 41px;
    padding: 0 3px;
}

.toolbar button {
    width: 32px;
    height: 24px;
}

.omnibox {
    display: flex;
    align-items: center;
    flex: 1;
    height: 29px;
    margin: 0 7px 0 6px;
    padding: 0 7px 0 4px;
    border-radius: 15px;
    background-color: #e0e0e0;
}

.omnibox p {
    flex: 1;
    margin-left: 7px;
    font-size: 12px;
}

.omnibox p span {
    color: #666;
}

.omnibox button {
    width: 28px;
}

.omnibox .site-info {
    width: 21px;
    height: 21px;
    border-radius: 50%;
    background-color: #fff;
}

.extensions {
    display: flex;
}

.shield-light {
    color: #888;
}

.shield-dark {
    color: #445;
}

.divider {
    width: 1px;
    height: 14px;
    background-color: #8fdcea;
}

.toolbar .divider {
    margin: 0 7px 0 5px;
}

.bookmarks {
    display: flex;
    align-items: center;
    flex: none;
    gap: 16px;
    height: 30px;
    padding: 0 12px 6px;
    font-size: 11px;
}

.bookmarks a {
    display: flex;
    align-items: center;
    gap: 5px;
    white-space: nowrap;
}

.bookmarks a svg {
    width: 15px;
    height: 15px;
}

.bookmarks .more {
    margin-left: auto;
}

.bookmarks .all {
    margin-left: -3px;
}

.mp {
    font-size: 9px;
    font-weight: 900;
    text-anchor: middle;
    fill: #fff;
}

.kahoot {
    font-size: 13px;
    font-weight: 900;
    fill: #46178f;
}

/* easel header */
.easel-bar,
.workspace,
.workpieces {
    font-family: Lato, "Noto Sans", sans-serif;
    font-variant-numeric: oldstyle-nums;
}

.easel-bar {
    display: flex;
    align-items: center;
    flex: none;
    height: 48px;
    padding: 0 5px 1px 11px;
    border-top: 1px solid #222;
    background-color: #3b3c39;
    color: #f2f2f2;
}

.easel-bar h1 {
    margin-left: 15px;
    font-size: 20px;
    font-weight: 400;
    white-space: nowrap;
}

.logo-pro {
    font-size: 7px;
    font-weight: 800;
    text-anchor: middle;
    fill: #3b3c39;
}

.star {
    margin-left: 7px;
}

.check {
    margin-left: 6px;
}

.menu {
    display: flex;
    align-items: center;
    gap: 12px;
    margin-left: 15px;
    font-size: 13px;
}

.menu .inventables {
    display: flex;
    align-items: center;
    gap: 2px;
    margin-left: 3px;
    color: #e0a24a;
}

.trial {
    margin-left: auto;
    text-align: center;
    font-size: 12px;
    line-height: 16px;
}

.trial b {
    font-weight: 400;
    color: #e0a24a;
}

.trial a {
    text-decoration: underline;
}

.carve,
.jog {
    height: 35px;
    border: 1px solid #5fa0dc;
    border-radius: 2px;
    background-color: #478dc9;
    color: #fff;
}

.carve {
    gap: 8px;
    width: 141px;
    margin: 0 4px 0 11px;
    font-size: 15px;
}

.carve small {
    padding: 0 4px;
    background-color: #fff;
    color: #478dc9;
    font-size: 11px;
    font-weight: 700;
    line-height: 14px;
}

.jog {
    width: 35px;
}

/* workspace */
.workspace {
    display: flex;
    flex: 1;
    min-height: 0;
}

.design {
    display: grid;
    grid-template: 1fr 12px / 1fr 13px;
    flex: 651;
    min-width: 0;
    background-color: #ededed;
}

.design-view {
    position: relative;
    min-width: 0;
    overflow: hidden;
    background-color: #cbe5fc;
}

.design-canvas,
.preview-canvas {
    position: absolute;
    width: 100%;
    height: 100%;
    font-variant-numeric: lining-nums;
}

.ruler-cuts {
    stroke: #b1b1b1;
    stroke-width: 4;
    stroke-linecap: round;
}

.lettering,
.toolpath,
.toolpath-inner {
    font-family: "Liberation Sans Narrow", "Open Sans Condensed", "Liberation Sans", sans-serif;
    font-weight: 700;
    font-style: italic;
    fill: none;
    stroke-linejoin: round;
}

.lettering {
    font-size: 56px;
    stroke: #b1b1b1;
    stroke-width: 4;
}

.lettering .small {
    font-size: 36px;
}

.lettering .zero {
    font-family: "Liberation Sans", sans-serif;
    font-size: 36px;
}

.axis {
    font-family: Roboto, sans-serif;
    font-size: 11px;
    text-anchor: middle;
    fill: #3e6186;
}

.tools {
    position: relative;
    width: 40px;
    border-right: 1px solid #ccc;
    background-color: #fff;
}

.collapse {
    width: 100%;
    height: 21px;
    background-color: #e2e2e2;
}

.tool-list {
    display: grid;
    grid-auto-rows: 1fr;
    height: 316px;
}

.tool-list button {
    position: relative;
    border-bottom: 1px solid #c4c4c4;
}

.has-more::after {
    content: "";
    position: absolute;
    right: 0;
    bottom: 0;
    border: 4px solid transparent;
    border-right-color: #999;
    border-bottom-color: #999;
}

.tool-text {
    font-family: "Liberation Serif", serif;
    font-size: 22px;
    font-weight: 700;
    color: #555;
}

.units {
    display: flex;
    align-items: center;
    position: absolute;
    left: 13px;
    bottom: 7px;
    gap: 5px;
    font-size: 12px;
    color: #777;
}

.units input {
    appearance: none;
    width: 36px;
    height: 18px;
    border: 1px solid #666;
    border-radius: 9px;
    background-color: #a9c6e2;
}

.units input::before {
    content: "";
    display: block;
    width: 16px;
    height: 16px;
    border-radius: 50%;
    background-color: #fff;
    box-shadow: 0 0 0 1px #666;
}

.zoom {
    display: flex;
    gap: 3px;
    position: absolute;
    right: 7px;
    bottom: 7px;
}

.zoom div {
    display: flex;
}

.zoom button {
    width: 20px;
    height: 21px;
    background-color: #f6f6f6;
}

.scroll-y {
    border-right: 1px solid #d5d5d5;
}

.scroll-y i {
    display: block;
    width: 8px;
    height: 27px;
    margin: 366px 0 0 2px;
    border-radius: 4px;
    background-color: #bbb;
}

.scroll-x {
    grid-column: 1 / 3;
}

.scroll-x i {
    display: block;
    width: 27px;
    height: 8px;
    margin: 2px 0 0 34%;
    border-radius: 4px;
    background-color: #bbb;
}

.splitter {
    display: flex;
    flex-direction: column;
    width: 13px;
}

.splitter button {
    flex: 1;
    background-color: #dedede;
}

.grip {
    display: flex;
    align-items: center;
    justify-content: center;
    flex: 2;
    border: 1px solid #ccc;
    border-width: 1px 0;
    background-color: #f4f4f4;
}

.preview {
    flex: 536;
    min-width: 0;
    position: relative;
    overflow: hidden;
}

.shade {
    stroke: #7f8878;
    stroke-width: 2;
}

.cuts {
    stroke: #2a78b5;
    stroke-width: 2;
}

.toolpath {
    font-size: 48px;
    stroke: #2a78b5;
    stroke-width: 4;
}

.toolpath-inner {
    font-size: 48px;
    stroke: #d8c8a8;
    stroke-width: 2;
}

.toolpath .small,
.toolpath-inner .small {
    font-size: 30px;
}

.toolpath .zero,
.toolpath-inner .zero {
    font-family: "Liberation Sans", sans-serif;
    font-size: 30px;
}

.rapids {
    fill: none;
    stroke: #c4161c;
}

.preview .axis {
    font-family: "Liberation Sans", sans-serif;
    fill: #8492a6;
}

.material-bar {
    display: flex;
    position: absolute;
    top: 0;
    right: 0;
    height: 39px;
    border: 1px solid #ccc;
    border-width: 0 0 1px 1px;
    background-color: #fff;
    font-size: 15px;
    line-height: 16px;
    color: #666;
}

.material-bar button {
    padding-bottom: 2px;
    border-right: 1px solid #ccc;
}

.material-bar small {
    display: block;
    font-size: 12px;
    color: #888;
}

.material {
    width: 143px;
    gap: 3px;
}

.material i {
    width: 26px;
    height: 26px;
    background-color: #e6d0a4;
}

.bit {
    width: 88px;
}

.add {
    width: 32px;
}

.settings {
    width: 106px;
    font-size: 13px;
}

.player {
    display: flex;
    align-items: center;
    position: absolute;
    right: 4px;
    bottom: 4px;
    font-size: 13px;
    color: #888;
}

.player button {
    width: 27px;
    height: 32px;
    border-radius: 2px;
    background-color: #478dc9;
}

.player .play {
    width: 31px;
    margin-right: 5px;
    border-radius: 50%;
}

.speed {
    width: 36px;
    text-align: center;
}

.player .skip {
    width: 30px;
}

.player .first {
    margin-left: 9px;
}

.player input {
    appearance: none;
    width: 112px;
    height: 7px;
    margin: 0 5px;
    border: 1px solid #aaa;
    border-radius: 4px;
    background-color: #efefef;
}

.player input::-webkit-slider-thumb {
    appearance: none;
    width: 13px;
    height: 13px;
    border-radius: 50%;
    background-color: #0075ff;
}

.clock {
    margin: 0 5px 0 9px;
}

.player .options {
    width: 24px;
    margin-left: 5px;
    background-color: #f3f3f3;
}

.workpieces {
    display: flex;
    align-items: center;
    flex: none;
    gap: 4px;
    height: 22px;
    padding: 0 0 1px 5px;
    background-color: #eee;
    font-size: 13px;
    color: #555;
}

.workpieces .help {
    width: 12px;
    height: 12px;
    margin-left: 5px;
    border-radius: 50%;
    background-color: #478dc9;
    color: #fff;
    font-size: 10px;
    font-weight: 700;
}

/* system shelf */
.shelf {
    display: flex;
    align-items: center;
    flex: none;
    height: 43px;
    padding: 0 5px;
    border-top: 1px solid #c4ced3;
    background-color: #dbe4e9;
    font-size: 12px;
    font-weight: 500;
}

.launcher {
    width: 32px;
    height: 32px;
    margin-right: auto;
    border-radius: 50%;
    background-color: #f3f7f9;
}

.desk {
    width: 119px;
    height: 32px;
    border-radius: 10px;
    background-color: #ecf2f5;
}

.apps {
    display: flex;
    align-items: center;
    gap: 21px;
    margin: 0 100px 0 17px;
}

.apps svg {
    width: 28px;
    height: 28px;
}

.apps button {
    position: relative;
}

.running::after {
    content: "";
    position: absolute;
    bottom: -5px;
    width: 12px;
    height: 2px;
    background-color: #222;
}

.apps i {
    width: 1px;
    height: 18px;
    margin: 0 -11px;
    background-color: #b5bfc4;
}

.zoom-word {
    font-size: 8px;
    font-weight: 700;
    text-anchor: middle;
    fill: #fff;
}

.tray {
    display: flex;
    align-items: center;
    gap: 3px;
}

.sign-out {
    width: 73px;
    height: 28px;
    margin: 0 6px 0 8px;
    border-radius: 14px;
    background-color: #cc4c22;
    color: #fbe9e3;
    font-weight: 400;
}

.status {
    gap: 8px;
    width: 61px;
    height: 32px;
    border-radius: 3px;
    background-color: #eef3f6;
}

.status.left {
    width: 58px;
    border-radius: 16px 3px 3px 16px;
}

.status.right {
    width: 84px;
    gap: 7px;
    border-radius: 3px 16px 16px 3px;
}

.status b {
    width: 13px;
    border-radius: 50%;
    background-color: #111;
    color: #fff;
    font-size: 10px;
    line-height: 13px;
    text-align: center;
}
```
